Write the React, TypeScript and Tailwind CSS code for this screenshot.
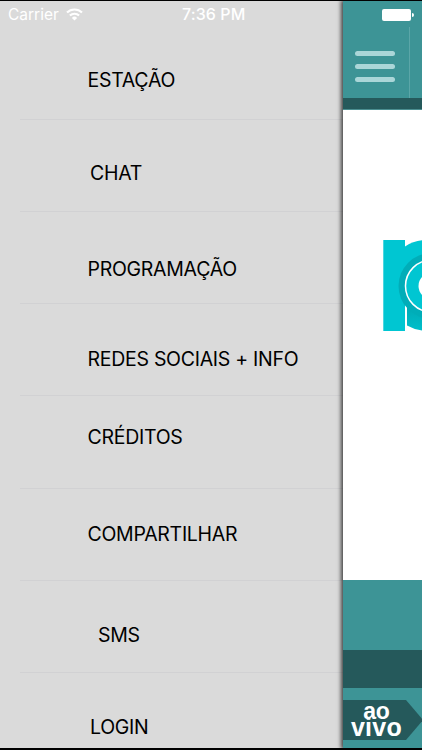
import React from 'react';

const menuItems = [
  { label: 'ESTAÇÃO', row: 'h-[93px] pt-[41px]', text: 'pl-[67.5px]' },
  { label: 'CHAT', row: 'h-[92px] pt-[41px]', text: 'pl-[70px]' },
  { label: 'PROGRAMAÇÃO', row: 'h-[92px] pt-[45px]', text: 'pl-[67.5px]' },
  { label: 'REDES SOCIAIS + INFO', row: 'h-[92px] pt-[43px]', text: 'pl-[67.5px]' },
  { label: 'CRÉDITOS', row: 'h-[93px] pt-[29px]', text: 'pl-[67.5px]' },
  { label: 'COMPARTILHAR', row: 'h-[92px] pt-[33px]', text: 'pl-[67.5px]' },
  { label: 'SMS', row: 'h-[92px] pt-[42px]', text: 'pl-[78px]' },
];

const StatusBar: React.FC = () => (
  <div className="absolute inset-x-0 top-[4px] h-[19px] flex items-center text-white text-base leading-[19px]">
    <span className="w-[57.5px] ml-2 text-[15.5px]">Carrier</span>
    <svg className="w-[17px] h-[13px]" viewBox="0 0 17 13" fill="none" stroke="currentColor" strokeWidth="2.1">
      <path d="M1 4.6a10.6 10.6 0 0 1 15 0" />
      <path d="M3.9 7.6a6.5 6.5 0 0 1 9.2 0" />
      <path d="M8.5 12.6L5.9 9.9a3.7 3.7 0 0 1 5.2 0z" fill="currentColor" stroke="none" />
    </svg>
    <span className="ml-[99.5px] w-[200px] font-medium tracking-[0.1px]">7:36 PM</span>
    <div className="w-[29px] h-[12px] shrink-0 rounded-[2px] bg-white" />
    <div className="ml-px w-[2px] h-1 shrink-0 rounded-r-full bg-white" />
  </div>
);

const Menu: React.FC = () => (
  <nav className="w-[343px] shrink-0 pt-[26px] bg-[#dadada] text-black text-[19.5px] leading-6 tracking-[-0.28px]">
    {menuItems.map((item) => (
      <div key={item.label} className={`ml-5 border-b border-[#d1d1d3] ${item.row}`}>
        <span className={`block whitespace-nowrap ${item.text}`}>{item.label}</span>
      </div>
    ))}
    <div className="ml-5 pt-[42px]">
      <span className="block pl-[70px]">LOGIN</span>
    </div>
  </nav>
);

const Logo: React.FC = () => (
  <svg className="w-[39px] h-[92px]" viewBox="383 240 39 92">
    <defs>
      <linearGradient id="bowl" x1="0" y1="0" x2="0" y2="1">
        <stop offset="0.2" stopColor="#00a9b4" />
        <stop offset="1" stopColor="#00bfcb" />
      </linearGradient>
    </defs>
    <rect x="383.3" y="240" width="21.7" height="91" fill="#00c6d2" />
    <path d="M405 246.5Q413 241 422 240.3V300H405z" fill="#00c6d2" />
    <path d="M407 300h15v30.5q-8-1-15-5z" fill="url(#bowl)" />
    <path d="M405 304h2v28h-2z" fill="#fff" />
    <circle cx="431.5" cy="286" r="33" fill="#00adb8" />
    <circle cx="431.5" cy="286" r="26" fill="#00c6d2" stroke="#fff" strokeWidth="1.5" />
    <circle cx="431.5" cy="286" r="13" fill="#fff" />
  </svg>
);

const Player: React.FC = () => (
  <main className="relative flex-1 min-w-0 overflow-hidden flex flex-col bg-[#3d9496]">
    <header className="h-[97px] shrink-0 flex">
      <div className="w-[66px] pl-[12px] pt-[50px] flex flex-col gap-[7.75px]">
        <div className="w-[40px] h-[5px] rounded-full bg-[#aad6d8]" />
        <div className="w-[40px] h-[5px] rounded-full bg-[#aad6d8]" />
        <div className="w-[40px] h-[5px] rounded-full bg-[#aad6d8]" />
      </div>
      <div className="mt-[26px] w-px bg-[#5ba6a8]" />
    </header>
    <div className="h-[12px] shrink-0 bg-[#25595b] border-b border-[#4b8e90]" />
    <section className="h-[470px] shrink-0 pt-[130px] pl-[40px] bg-white">
      <Logo />
    </section>
    <div className="h-[70px] shrink-0" />
    <div className="h-[38px] shrink-0 bg-[#25595b]" />
    <div className="mt-[12px] h-[40px] shrink-0 w-[80px] pt-[3px] pr-[13px] bg-[#25595b] [clip-path:polygon(0_0,63px_0,100%_50%,63px_100%,0_100%)] text-white font-bold text-center text-[25px] leading-[16px] font-['Liberation_Sans',Arial,sans-serif]">
      <div className="text-[23px] leading-[16px] tracking-[-0.2px]">ao</div>
      <div className="tracking-[0.3px]">vivo</div>
    </div>
  </main>
);

const App: React.FC = () => (
  <div className="relative w-[422px] h-[750px] overflow-hidden flex bg-[#dadada] border-t border-b-2 border-black font-[Inter,sans-serif]">
    <Menu />
    <div className="relative flex flex-1 min-w-0 shadow-[-1px_0_4px_1px_rgba(0,0,0,0.7)]">
      <Player />
    </div>
    <StatusBar />
  </div>
);

export default App;
